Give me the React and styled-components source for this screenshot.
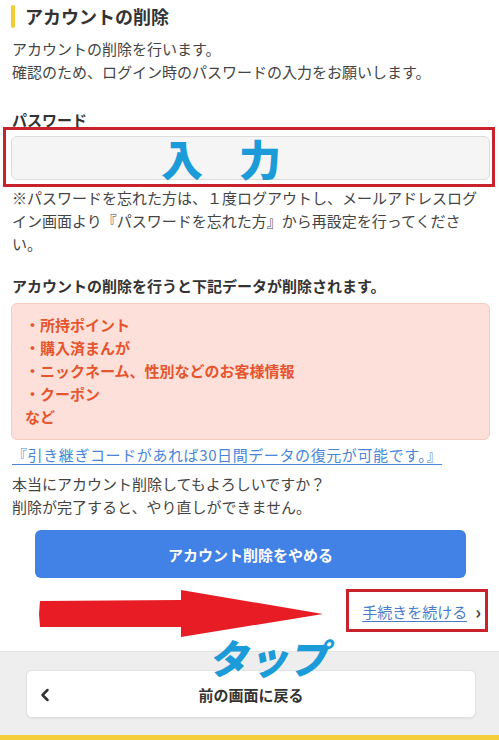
import React from "react"
import styled, { createGlobalStyle } from "styled-components"
import { ChevronLeft } from "lucide-react"

const GlobalStyle = createGlobalStyle`
  body {
    margin: 0;
    background: #ffffff;
    font-family: "Noto Sans CJK JP", "Noto Sans", sans-serif;
    color: #333333;
  }
`

const deletedItems = [
  "・所持ポイント",
  "・購入済まんが",
  "・ニックネーム、性別などのお客様情報",
  "・クーポン",
  "など",
]

export default function App() {
  return (
    <Screen>
      <GlobalStyle />
      <Main>
        <Heading>
          <Mark />
          <Title>アカウントの削除</Title>
        </Heading>
        <Lead>
          アカウントの削除を行います。
          <br />
          確認のため、ログイン時のパスワードの入力をお願いします。
        </Lead>

        <Label>パスワード</Label>
        <InputWrap>
          <PasswordInput type="password" aria-label="パスワード" />
          <Frame $inset="-9px -5px -7px -8px" />
          <InputNote>入　力</InputNote>
        </InputWrap>
        <Hint>
          ※パスワードを忘れた方は、１度ログアウトし、メールアドレスログイン画面より『パスワードを忘れた方』から再設定を行ってください。
        </Hint>

        <SubHeading>アカウントの削除を行うと下記データが削除されます。</SubHeading>
        <DataBox>
          {deletedItems.map((item) => (
            <DataItem key={item}>{item}</DataItem>
          ))}
        </DataBox>
        <InheritLink href="#">
          『引き継ぎコードがあれば30日間データの復元が可能です。』
        </InheritLink>

        <Confirm>
          本当にアカウント削除してもよろしいですか？
          <br />
          削除が完了すると、やり直しができません。
        </Confirm>

        <StopButton type="button">アカウント削除をやめる</StopButton>

        <ContinueRow>
          <Arrow viewBox="0 0 286 49" aria-hidden="true">
            <polygon
              points="1,12 142,11 142,1 284,25 142,48 142,38 1,38 0,25"
              fill="#e81c25"
            />
          </Arrow>
          <ContinueLink href="#">
            <ContinueText>手続きを続ける</ContinueText>
            <Chevron>›</Chevron>
            <Frame $inset="-11px -7px -9px -16px" />
          </ContinueLink>
          <TapNote>タップ</TapNote>
        </ContinueRow>
      </Main>

      <Footer>
        <BackButton type="button">
          <BackIcon>
            <ChevronLeft size={20} strokeWidth={3} />
          </BackIcon>
          前の画面に戻る
        </BackButton>
      </Footer>
      <BottomBar />
    </Screen>
  )
}

const Screen = styled.div`
  width: 499px;
  min-height: 740px;
  display: flex;
  flex-direction: column;
  overflow: hidden;
`

const Main = styled.main`
  flex: 1;
  padding: 0 12px;
  display: flex;
  flex-direction: column;
  font-size: 15px;
  line-height: 23px;
`

const Heading = styled.div`
  margin-top: 5px;
  margin-left: -1px;
  display: flex;
  align-items: center;
  gap: 10px;
`

const Mark = styled.span`
  width: 4px;
  height: 23px;
  border-radius: 2px;
  background: #f2cb35;
`

const Title = styled.h1`
  margin: 0;
  font-size: 18px;
  line-height: 23px;
  font-weight: 700;
  color: #333333;
`

const Lead = styled.p`
  margin: 9px 0 0;
  color: #444444;
`

const Label = styled.div`
  margin-top: 25px;
  font-weight: 700;
  color: #333333;
`

const InputWrap = styled.div`
  position: relative;
  margin: 5px -3px 0 -1px;
`

const PasswordInput = styled.input`
  display: block;
  box-sizing: border-box;
  width: 100%;
  height: 44px;
  border: 1px solid #dcdcdc;
  border-radius: 6px;
  background: #f5f5f5;
  outline: none;
`

/* red annotation frame laid over a part of the page */
const Frame = styled.span`
  position: absolute;
  inset: ${(p) => p.$inset};
  border: 3px solid #c8222c;
  pointer-events: none;
`

const InputNote = styled.span`
  position: absolute;
  left: 150px;
  top: 0;
  font-size: 42px;
  line-height: 44px;
  letter-spacing: -3px;
  font-weight: 900;
  color: #1b9bd8;
  pointer-events: none;
`

const Hint = styled.p`
  margin: 6px 0 0;
  color: #444444;
`

const SubHeading = styled.h2`
  margin: 19px 0 0;
  font-size: 15px;
  line-height: 23px;
  font-weight: 700;
  color: #333333;
`

const DataBox = styled.ul`
  list-style: none;
  margin: 6px -3px 0 -1px;
  padding: 9px 13px 11px;
  border: 1px solid #f6cabf;
  border-radius: 6px;
  background: #fde0da;
`

const DataItem = styled.li`
  font-weight: 700;
  color: #e6552d;
`

const InheritLink = styled.a`
  margin-top: 3px;
  align-self: flex-start;
  color: #4a86d8;
  letter-spacing: 0.6px;
  text-decoration: underline;
  text-underline-offset: 3px;
`

const Confirm = styled.p`
  margin: 6px 0 0;
  color: #444444;
`

const StopButton = styled.button`
  margin: 12px 0 0 23px;
  width: 431px;
  height: 48px;
  border: none;
  border-radius: 6px;
  background: #4281e6;
  color: #ffffff;
  font-family: inherit;
  font-size: 15px;
  font-weight: 700;
`

const ContinueRow = styled.div`
  position: relative;
  height: 73px;
  box-sizing: border-box;
  padding: 22px 6px 0 0;
  display: flex;
  justify-content: flex-end;
  align-items: flex-start;
`

const Arrow = styled.svg`
  position: absolute;
  left: 27px;
  top: 11px;
  width: 286px;
  height: 49px;
`

const ContinueLink = styled.a`
  position: relative;
  display: flex;
  align-items: center;
  gap: 8px;
  text-decoration: none;
`

const ContinueText = styled.span`
  color: #4a7cc9;
  text-decoration: underline;
  text-underline-offset: 3px;
`

const Chevron = styled.span`
  color: #444444;
  font-size: 18px;
  font-weight: 700;
`

const TapNote = styled.span`
  position: absolute;
  left: 200px;
  top: 57px;
  z-index: 2;
  font-size: 40px;
  line-height: 44px;
  font-weight: 900;
  color: #1b9bd8;
  transform: skewX(-12deg);
  pointer-events: none;
`

const Footer = styled.footer`
  height: 84px;
  box-sizing: border-box;
  padding: 18px 23px 0 26px;
  background: #eeeeee;
  border-top: 1px solid #e4e4e4;
`

const BackButton = styled.button`
  position: relative;
  width: 100%;
  height: 48px;
  border: 1px solid #e2e2e2;
  border-radius: 6px;
  background: #ffffff;
  box-shadow: 0 1px 2px rgba(0, 0, 0, 0.06);
  display: flex;
  align-items: center;
  justify-content: center;
  font-family: inherit;
  font-size: 15px;
  font-weight: 700;
  color: #333333;
`

const BackIcon = styled.span`
  position: absolute;
  left: 8px;
  top: 14px;
  display: flex;
  color: #333333;
`

const BottomBar = styled.div`
  height: 5px;
  background: #f4cf3b;
`
